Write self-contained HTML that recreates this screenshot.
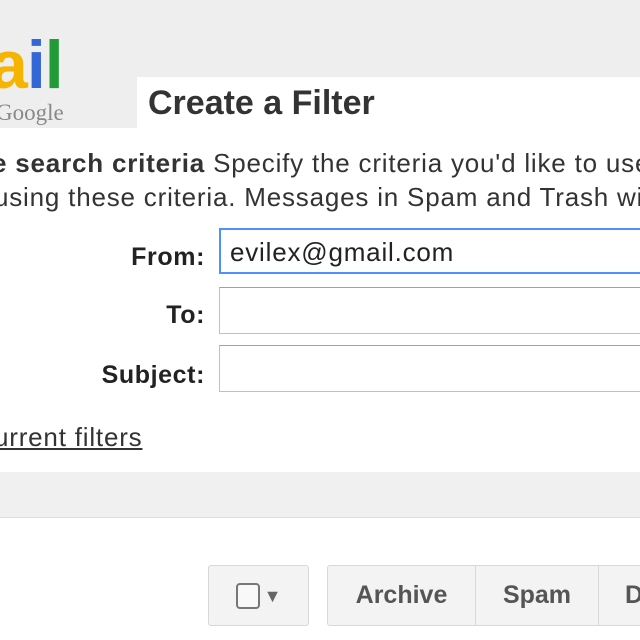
<!DOCTYPE html>
<html><head><style>
body{margin:0;width:640px;height:640px;overflow:hidden;background:#fff;font-family:"Liberation Sans",sans-serif;position:relative;color:#222}
.a{position:absolute;white-space:nowrap}
.lbl{position:absolute;right:435px;font-weight:bold;font-size:25px;letter-spacing:0.6px;color:#222}
.inp{position:absolute;left:219px;width:440px;height:46px;border:1px solid #c0c0c0;border-top-color:#a0a0a0;box-sizing:border-box}
.btn{position:absolute;top:565px;height:61px;background:#f3f3f3;border:1px solid #d8d8d8;border-radius:3px;box-sizing:border-box;font-weight:bold;font-size:25px;color:#555;text-align:center;line-height:58px}
.t{font-size:26px;letter-spacing:0.8px;color:#333}
</style></head><body>
<div class="a" style="left:0;top:0;width:640px;height:77px;background:#eeeeee"></div>
<div class="a" style="left:0;top:77px;width:137px;height:51px;background:#eeeeee"></div>
<div class="a" style="left:-10px;top:26px;font-size:68px;letter-spacing:-1px"><span style="color:#f4b400;font-weight:bold">a</span><span style="color:#3367d6;font-weight:bold">i</span><span style="color:#229a35;font-weight:bold">l</span></div>
<div class="a" style="left:-4px;top:100px;font-family:'Liberation Serif',serif;font-size:23px;color:#888">Google</div>
<div class="a" style="left:148px;top:84px;font-size:34px;font-weight:bold;color:#333">Create a Filter</div>
<div class="a t" style="left:-8px;top:148px"><b>e search criteria</b> Specify the criteria you'd like to use</div>
<div class="a t" style="left:-6px;top:182px">using these criteria. Messages in Spam and Trash wi</div>
<div class="lbl" style="top:243px">From:</div>
<div class="lbl" style="top:301px">To:</div>
<div class="lbl" style="top:361px">Subject:</div>
<div class="inp" style="top:228px;border:2px solid #4d90fe"><span class="a t" style="left:9px;top:7px;color:#222">evilex@gmail.com</span></div>
<div class="inp" style="top:287px;height:47px"></div>
<div class="inp" style="top:345px;height:47px"></div>
<div class="a t" style="left:-6px;top:422px;text-decoration:underline">urrent filters</div>
<div class="a" style="left:0;top:472px;width:640px;height:45px;background:#f0f0f0;border-bottom:1px solid #ddd"></div>
<div class="btn" style="left:208px;width:101px"><span style="display:inline-block;width:20px;height:22px;border:2px solid #777;border-radius:4px;vertical-align:middle;background:#f8f8f8"></span><span style="font-size:18px;color:#666;vertical-align:middle;margin-left:4px">▼</span></div>
<div class="btn" style="left:327px;width:149px;border-radius:3px 0 0 3px">Archive</div>
<div class="btn" style="left:475px;width:124px;border-radius:0">Spam</div>
<div class="btn" style="left:598px;width:60px;border-radius:0;text-align:left;padding-left:26px">D</div>
</body></html>
